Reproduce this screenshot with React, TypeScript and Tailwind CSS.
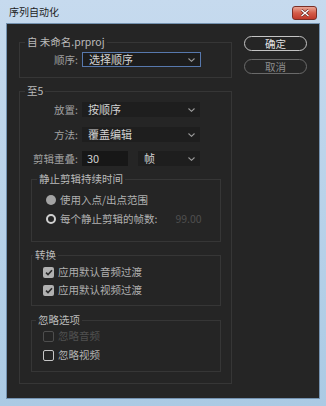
import React from 'react';

const Chevron = () => (
  <svg width="7" height="4" viewBox="0 0 7 4">
    <path d="M0.5 0.5 L3.5 3.3 L6.5 0.5" fill="none" stroke="#9a9a9a" strokeWidth="1.1" />
  </svg>
);

const Select = ({ value, className }: { value: string; className: string }) => (
  <div className={`flex h-[15px] items-center justify-between pl-[6px] pr-[5px] text-[11px] leading-[15px] text-[#d2d2d2] ${className}`}>
    <span>{value}</span>
    <Chevron />
  </div>
);

const Radio = ({ on, label, extra }: { on: boolean; label: string; extra?: string }) => (
  <div className="flex h-[14px] items-center gap-[4px] text-[10.5px] leading-[14px] text-[#b0b0b0]">
    {on ? (
      <span className="h-[10px] w-[10px] rounded-full bg-[#a3a3a3]" />
    ) : (
      <span className="h-[10px] w-[10px] rounded-full border-[2px] border-[#d0d0d0] bg-[#252525]" />
    )}
    <span>{label}</span>
    {extra && <span className="ml-[14px] text-[#4f4f4f]">{extra}</span>}
  </div>
);

const Check = ({ state, label }: { state: 'on' | 'off' | 'disabled'; label: string }) => (
  <div
    className={`flex h-[14px] items-center gap-[4px] text-[10.5px] leading-[14px] ${
      state === 'disabled' ? 'text-[#505050]' : 'text-[#b0b0b0]'
    }`}
  >
    {state === 'on' && (
      <span className="flex h-[11px] w-[11px] items-center justify-center rounded-[2px] bg-[#b1b1b1]">
        <svg width="8" height="7" viewBox="0 0 8 7">
          <path d="M1 3.6 L3 5.6 L7 1.2" fill="none" stroke="#2b2b2b" strokeWidth="1.6" />
        </svg>
      </span>
    )}
    {state === 'off' && <span className="h-[11px] w-[11px] rounded-[2px] border-[1.5px] border-[#c6c6c6]" />}
    {state === 'disabled' && <span className="h-[11px] w-[11px] rounded-[2px] border-[1.5px] border-[#4e4e4e]" />}
    <span>{label}</span>
  </div>
);

const Legend = ({ children, className }: { children: React.ReactNode; className: string }) => (
  <legend className={`px-[2px] text-[10.5px] leading-[14px] text-[#bababa] ${className}`}>{children}</legend>
);

export default function App() {
  return (
    <div className="flex h-[406px] w-[326px] flex-col bg-gradient-to-b from-[#c6daee] to-[#abcae4] font-['Noto_Sans_CJK_SC','Noto_Sans',sans-serif]">
      {/* title bar */}
      <div className="flex h-[24px] items-center justify-between pl-[9px] pr-[9px]">
        <span className="text-[10px] leading-[14px] text-[#1c1c1c]">序列自动化</span>
        <div className="mt-[1px] flex h-[14px] w-[25px] items-center justify-center rounded-[3px] border border-[#7a2f26] bg-gradient-to-b from-[#e8a596] via-[#d45c48] to-[#c0392a]">
          <svg width="10" height="8" viewBox="0 0 10 8">
            <path d="M1.5 1 L8.5 7 M8.5 1 L1.5 7" stroke="#5a1a14" strokeWidth="2.6" />
            <path d="M1.5 1 L8.5 7 M8.5 1 L1.5 7" stroke="#ffffff" strokeWidth="1.5" />
          </svg>
        </div>
      </div>

      {/* dialog body */}
      <div className="ml-[7px] flex h-[374px] w-[312px] bg-[#252525] pl-[12px] pt-[11px] shadow-[0_0_0_1px_#7492b0]">
        <div className="flex w-[213px] flex-col">
          <fieldset className="border border-[#363636] pb-[10px]">
            <Legend className="ml-[5px]">自 未命名.prproj</Legend>
            <div className="mt-[3px] flex items-center">
              <span className="w-[58px] text-right text-[10.5px] leading-[15px] text-[#a0a0a0]">顺序:</span>
              <Select value="选择顺序" className="ml-[4px] w-[119px] border border-[#5778ad] bg-[#1c1c1c]" />
            </div>
          </fieldset>

          <fieldset className="mt-[6px] border border-[#363636] pb-[11px]">
            <Legend className="ml-[5px]">至5</Legend>
            <div className="mt-[4px] flex items-center">
              <span className="w-[58px] text-right text-[10.5px] leading-[15px] text-[#a0a0a0]">放置:</span>
              <Select value="按顺序" className="ml-[4px] w-[118px] bg-[#1e1e1e]" />
            </div>
            <div className="mt-[10px] flex items-center">
              <span className="w-[58px] text-right text-[10.5px] leading-[15px] text-[#a0a0a0]">方法:</span>
              <Select value="覆盖编辑" className="ml-[4px] w-[118px] bg-[#1e1e1e]" />
            </div>
            <div className="mt-[9px] flex items-center">
              <span className="w-[58px] text-right text-[10.5px] leading-[15px] text-[#a0a0a0]">剪辑重叠:</span>
              <div className="ml-[4px] h-[15px] w-[46px] bg-[#171717] pl-[5px] text-[11px] leading-[15px] text-[#d2d2d2]">30</div>
              <Select value="帧" className="ml-[10px] w-[62px] bg-[#1e1e1e]" />
            </div>

            <fieldset className="ml-[11px] mt-[6px] w-[190px] border border-[#363636] pb-[15px]">
              <Legend className="ml-[5px]">静止剪辑持续时间</Legend>
              <div className="mt-[7px] flex flex-col gap-[5px] pl-[14px]">
                <Radio on label="使用入点/出点范围" />
                <Radio on={false} label="每个静止剪辑的帧数:" extra="99.00" />
              </div>
            </fieldset>

            <fieldset className="ml-[11px] mt-[6px] w-[190px] border border-[#363636] pb-[8px]">
              <Legend className="ml-[1px]">转换</Legend>
              <div className="mt-[3px] flex flex-col gap-[4px] pl-[11px]">
                <Check state="on" label="应用默认音频过渡" />
                <Check state="on" label="应用默认视频过渡" />
              </div>
            </fieldset>

            <fieldset className="ml-[11px] mt-[7px] w-[190px] border border-[#363636] pb-[9px]">
              <Legend className="ml-[4px]">忽略选项</Legend>
              <div className="mt-[2px] flex flex-col gap-[5px] pl-[11px]">
                <Check state="disabled" label="忽略音频" />
                <Check state="off" label="忽略视频" />
              </div>
            </fieldset>
          </fieldset>
        </div>

        <div className="ml-[12px] flex flex-col gap-[8px] pt-[1px]">
          <div className="flex h-[15px] w-[63px] items-center justify-center rounded-full border border-[#c4c4c4] text-[10.5px] leading-[13px] text-[#e2e2e2]">
            确定
          </div>
          <div className="flex h-[15px] w-[63px] items-center justify-center rounded-full border border-[#6a6a6a] text-[10.5px] leading-[13px] text-[#8e8e8e]">
            取消
          </div>
        </div>
      </div>
    </div>
  );
}
